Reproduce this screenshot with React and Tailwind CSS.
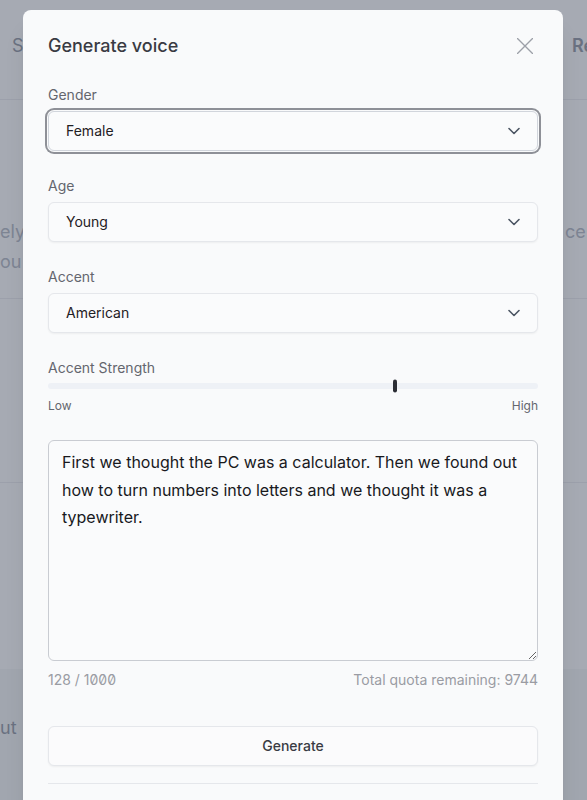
import { useState } from 'react';

const Chevron = () => (
  <svg width="12" height="8" viewBox="0 0 12 8" fill="none">
    <path d="M1 1.5L6 6.5L11 1.5" stroke="#4b5563" strokeWidth="1.6" strokeLinecap="round" strokeLinejoin="round" />
  </svg>
);

const SelectField = ({ label, value, focused }) => (
  <div className="mt-[25px]">
    <label className="block text-sm leading-5 text-[#64666e]">{label}</label>
    <button
      className={`mt-[6px] flex h-10 w-full items-center justify-between rounded-md border bg-[#fafbfc] pl-[17px] pr-[17px] text-sm text-[#1f2024] shadow-xs ${
        focused ? 'border-gray-300 ring-2 ring-[#8e9097] ring-offset-1 ring-offset-gray-50' : 'border-gray-200'
      }`}
    >
      <span>{value}</span>
      <Chevron />
    </button>
  </div>
);

const App = () => {
  const [text, setText] = useState(
    'First we thought the PC was a calculator. Then we found out how to turn numbers into letters and we thought it was a typewriter.'
  );

  return (
    <div className="relative h-[800px] overflow-hidden bg-white font-['Inter',sans-serif]">
      {/* page behind the dialog */}
      <div className="flex h-full flex-col">
        <header className="flex h-[100px] shrink-0 items-start border-b border-gray-200 pt-[34px] text-lg leading-6">
          <div className="w-[572px] shrink-0 pl-3 text-gray-500 whitespace-nowrap">Speech</div>
          <div className="font-semibold text-gray-500 whitespace-nowrap">Recent</div>
        </header>

        <section className="border-b border-gray-200 pt-[117px] pb-[21px] text-lg leading-[30px] text-gray-400">
          <div className="flex justify-between">
            <span>ely</span>
            <span className="w-[22px] overflow-hidden whitespace-nowrap">ce you</span>
          </div>
          <div>ou</div>
        </section>

        <section className="h-[184px] shrink-0 border-b border-gray-200" />

        <div className="h-[186px] shrink-0" />

        <footer className="flex-1 bg-gray-100 pt-[47px] text-lg leading-6 text-gray-500">
          <span>ut</span>
        </footer>
      </div>

      {/* overlay + dialog */}
      <div className="absolute inset-0 overflow-hidden bg-[#6b7280]/60">
        <div className="ml-[23px] mt-[10px] w-[540px] rounded-lg bg-gray-50 px-[25px] pt-[22px] pb-10 shadow-xl">
          <div className="flex h-7 items-center justify-between">
            <h2 className="text-lg font-medium leading-7 text-[#393b43]">Generate voice</h2>
            <button className="mr-[5px]">
              <svg width="16" height="16" viewBox="0 0 16 16" fill="none">
                <path d="M0.5 0.5L15.5 15.5M15.5 0.5L0.5 15.5" stroke="#9ca0a8" strokeWidth="1.4" strokeLinecap="round" />
              </svg>
            </button>
          </div>

          <SelectField label="Gender" value="Female" focused />
          <SelectField label="Age" value="Young" />
          <SelectField label="Accent" value="American" />

          <div className="mt-[25px]">
            <label className="block text-sm leading-5 text-[#64666e]">Accent Strength</label>
            <div className="relative mt-[5px] h-[6px] rounded-full bg-[#eef1f6]">
              <div className="absolute left-[70.8%] top-1/2 h-[13px] w-[4px] -translate-x-1/2 -translate-y-1/2 rounded-full bg-[#2b2d34]" />
            </div>
            <div className="mt-[9px] flex justify-between text-xs leading-4 text-[#64666e]">
              <span>Low</span>
              <span>High</span>
            </div>
          </div>

          <textarea
            value={text}
            onChange={(e) => setText(e.target.value)}
            className="mt-[26px] block h-[221px] w-full rounded-md border border-[#c9ccd2] bg-[#fafbfc] px-[13px] pt-[8px] text-base leading-[27.5px] text-[#18191d] outline-none"
          />

          <div className="mt-[9px] flex justify-between text-sm leading-5 text-[#9a9ca3]">
            <span className="slashed-zero">128 / 1000</span>
            <span>Total quota remaining: 9744</span>
          </div>

          <button className="mt-[36px] h-10 w-full rounded-md border border-gray-200 bg-[#fbfbfc] text-sm font-medium text-[#393b43] shadow-xs">
            Generate
          </button>

          <hr className="mt-[17px] border-gray-200" />
          <div className="h-10" />
        </div>
      </div>
    </div>
  );
};

export default App;
